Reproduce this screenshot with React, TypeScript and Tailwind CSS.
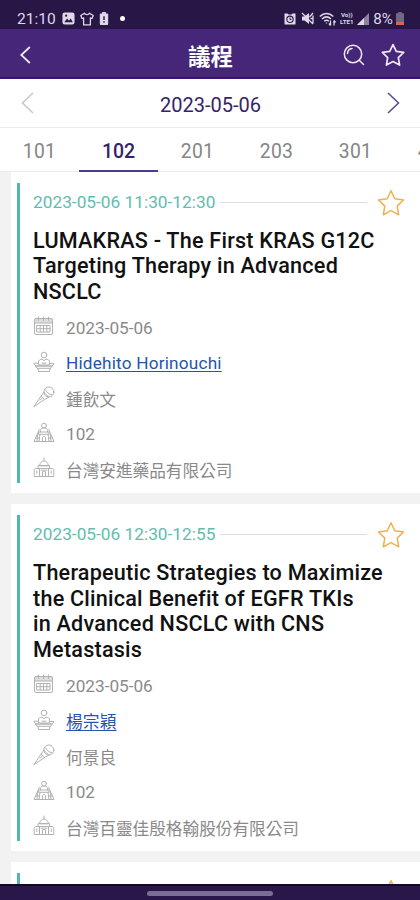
import type { ReactNode } from 'react';

interface Session {
  time: string;
  title: string[];
  date: string;
  speaker: string;
  host: string;
  room: string;
  sponsor: string;
}

const rooms = ['101', '102', '201', '203', '301', '401'];

const sessions: Session[] = [
  {
    time: '2023-05-06 11:30-12:30',
    title: ['LUMAKRAS - The First KRAS G12C', 'Targeting Therapy in Advanced', 'NSCLC'],
    date: '2023-05-06',
    speaker: 'Hidehito Horinouchi',
    host: '鍾飲文',
    room: '102',
    sponsor: '台灣安進藥品有限公司',
  },
  {
    time: '2023-05-06 12:30-12:55',
    title: ['Therapeutic Strategies to Maximize', 'the Clinical Benefit of EGFR TKIs', 'in Advanced NSCLC with CNS', 'Metastasis'],
    date: '2023-05-06',
    speaker: '楊宗穎',
    host: '何景良',
    room: '102',
    sponsor: '台灣百靈佳殷格翰股份有限公司',
  },
];

function Star({ className }: { className: string }) {
  return (
    <svg viewBox="0 0 28 28" className={className} fill="none" stroke="currentColor" strokeLinejoin="round">
      <path d="M14 1.8l3.8 8 8.7 1.2-6.3 6.1 1.5 8.700L14 21.600l-7.700 4.200 1.500-8.700L1.500 11l8.700-1.200z" />
    </svg>
  );
}

function RowIcon({ children }: { children: ReactNode }) {
  return (
    <svg viewBox="0 0 22 22" className="h-[22px] w-[22px] shrink-0 text-[#b2b2b2]" fill="none" stroke="currentColor" strokeWidth="1" strokeLinejoin="round" strokeLinecap="round">
      {children}
    </svg>
  );
}

function CalendarIcon() {
  return (
    <RowIcon>
      <path d="M1.5 3.5h18V8h-18z" fill="#dedede" stroke="none" />
      <rect x="1.5" y="3.5" width="18" height="16" rx="1.5" />
      <path d="M1.5 8h18M5.5 2v3.6M10.5 2v3.6M15.5 2v3.6" />
      <path d="M4 10.5h13V17H4zM4 13.7h13M7.2 10.5V17M10.5 10.5V17M13.8 10.5V17" />
    </RowIcon>
  );
}

function SpeakerIcon() {
  return (
    <RowIcon>
      <circle cx="11" cy="4" r="2.8" />
      <path d="M5.5 13.5V11c0-1.8 1.6-2.8 3.5-2.8l2 1.5 2-1.5c2 0 3.6 1 3.6 2.8v2.5" />
      <path d="M1 12.5l1.8 2.5h16.4l1.8-2.5h-4L15.5 14h-9L5 12.5zM2.8 15h16.4l-1.5 2.3H4.3zM9 12.2h4M5 17.3l.6 3.2h10.8l.6-3.2" />
    </RowIcon>
  );
}

function MicIcon() {
  return (
    <RowIcon>
      <circle cx="15.9" cy="6" r="5" />
      <path d="M10.9 6.3L8 10.2.9 20.8l10.6-7.3 4.3-2.4M10.9 6.3l4.8 4.7M8 10.2l3.5 3.3M12.7 4c1.2 2.5 3 4.2 6 4.7M8.8 12.5l-1.6 1.7" />
    </RowIcon>
  );
}

function RoomIcon() {
  return (
    <RowIcon>
      <circle cx="11" cy="3.6" r="2.4" />
      <path d="M7.5 10V8.3C7.5 6.8 9 6 11 6s3.5.8 3.5 2.3V10" />
      <path d="M6 10h10v2.3H6zM7 12.3l-1 7.2h10l-1-7.2M6.3 7.5L1 19.5h5M15.7 7.5l5.3 12h-5M4.8 12L4 19M17.2 12l.8 7M2.8 16h3.5M15.7 16h3.5" />
      <path d="M9.5 19.5V16c0-2 3-2 3 0v3.5" />
    </RowIcon>
  );
}

function SponsorIcon() {
  return (
    <RowIcon>
      <path d="M11 1v3M6.5 8.5C7 5.5 9 4 11 4s4 1.5 4.5 4.5zM5.5 8.5h11v3h-11z" />
      <path d="M5.5 11.5H3c-1 0-1.8 1-1.8 2v6h19.6v-6c0-1-.8-2-1.8-2h-2.5M6.5 11.5v8M15.5 11.5v8M9.5 19.5v-4.8h3v4.8" />
      <path d="M3.8 14v2.5M18.2 14v2.5M8 13.2h6" />
    </RowIcon>
  );
}

function Row({ icon, text, link = false }: { icon: ReactNode; text: string; link?: boolean }) {
  const latin = /^[\x20-\x7e]+$/.test(text);
  return (
    <div className="flex h-6 items-center gap-[11px]">
      <div className="-mt-[5px]">{icon}</div>
      <span
        className={`leading-6 whitespace-nowrap ${latin ? '-mt-0.5 text-[17.2px]' : 'mt-0.5 text-[16.65px]'} ${
          link ? 'tracking-[0.2px] text-[#2455ae] underline decoration-1 underline-offset-2' : 'text-[#8a8a8a]'
        }`}
      >
        {text}
      </span>
    </div>
  );
}

function SessionCard({ session }: { session: Session }) {
  return (
    <article className="ml-[11px] flex shrink-0 bg-white pt-[11px] pb-[10.7px] pl-1.5">
      <div className="w-[3px] shrink-0 bg-[#4fb8b0]" />
      <div className="min-w-0 flex-1 pl-[13px]">
        <div className="flex h-[39px] items-center pr-[15px]">
          <span className="text-[17.3px] whitespace-nowrap text-[#62bdb0]">{session.time}</span>
          <div className="mr-[10px] ml-[5px] h-px flex-1 bg-[#dedede]" />
          <Star className="h-7 w-7 stroke-[1.5] text-[#efb04e]" />
        </div>
        <h2 className="mt-[5.5px] text-[21.6px] leading-[25.7px] font-medium tracking-[0.22px] text-[#111111]">
          {session.title.map((line) => (
            <span key={line} className="block whitespace-nowrap">{line}</span>
          ))}
        </h2>
        <div className="mt-[12px] flex flex-col gap-[11.5px]">
          <Row icon={<CalendarIcon />} text={session.date} />
          <Row icon={<SpeakerIcon />} text={session.speaker} link />
          <Row icon={<MicIcon />} text={session.host} />
          <Row icon={<RoomIcon />} text={session.room} />
          <Row icon={<SponsorIcon />} text={session.sponsor} />
        </div>
      </div>
    </article>
  );
}

function StatusBar() {
  return (
    <div className="flex h-[29px] shrink-0 items-center bg-[#281646] pt-2 pr-4 pl-[17px] text-[#ded8e8]">
      <span className="text-[15.5px] leading-5">21:10</span>
      <svg viewBox="0 0 14 14" className="ml-1.5 h-[13px] w-[13px]">
        <rect x="0.5" y="0.5" width="13" height="13" rx="2.5" fill="currentColor" />
        <path d="M2.5 11l3-4 2 2.3L9.3 7l2.4 4z" fill="#281646" />
        <circle cx="4.5" cy="4" r="1.2" fill="#281646" />
      </svg>
      <svg viewBox="0 0 14 14" className="ml-[5px] h-[14px] w-[14px]" fill="none" stroke="currentColor" strokeWidth="1.3" strokeLinejoin="round">
        <path d="M4.5 1.2L.8 3.5 2 6.5l1.6-.6v7h6.8v-7l1.6.6 1.2-3L9.5 1.2C8.8 3 5.2 3 4.5 1.2z" />
      </svg>
      <svg viewBox="0 0 10 14" className="ml-[5px] h-[13px] w-[10px]">
        <path d="M3 0h4v1.5h1.5c.6 0 1 .4 1 1V13c0 .6-.4 1-1 1h-7c-.6 0-1-.4-1-1V2.5c0-.6.4-1 1-1H3z" fill="currentColor" />
        <path d="M5 4.5v4M5 10v1.7" stroke="#281646" strokeWidth="1.5" />
      </svg>
      <span className="ml-[11px] h-[5px] w-[5px] rounded-full bg-white" />
      <div className="ml-auto flex items-center">
        <svg viewBox="0 0 12 12" className="h-[12px] w-[12px]">
          <path d="M.5.5h3l1 1h3l1-1h3v11H.5z" fill="currentColor" />
          <circle cx="6" cy="6.3" r="3.2" fill="none" stroke="#281646" strokeWidth="1.1" />
          <path d="M6 4.5v2h1.5" fill="none" stroke="#281646" />
        </svg>
        <svg viewBox="0 0 13 13" className="ml-[5px] h-[13px] w-[13px]">
          <path d="M1 4.5h2.5L8 1v11L3.5 8.5H1z" fill="currentColor" />
          <path d="M1 1l11 11M12 1L8.5 5M9.5 6.5H12M12 3.5v8" fill="none" stroke="currentColor" strokeWidth="1.3" />
        </svg>
        <svg viewBox="0 0 18 14" className="ml-[5px] h-[14px] w-[18px]" fill="none" stroke="currentColor" strokeWidth="1.5">
          <path d="M.8 4.5c4-4 9.5-4 13.5 0M3 7c2.8-2.6 6.3-2.6 9 0M5.2 9.3c1.5-1.3 3.200-1.3 4.7 0" />
          <path d="M7.5 11.5v-1M11.5 8.5v5M11.5 13.5l-1.5-2M15 13.5v-5M15 8.5l1.5 2" strokeWidth="1.3" />
        </svg>
        <div className="ml-0.5 flex w-[15px] flex-col items-center text-[6.2px] leading-[7px] font-bold">
          <span>Vo))</span>
          <span>LTE1</span>
        </div>
        <svg viewBox="0 0 12 12" className="ml-[3px] h-[12px] w-[12px]">
          <path d="M0 12L12 0v12z" fill="#8f849f" />
          <path d="M0 12l7-7v7z" fill="currentColor" />
        </svg>
        <span className="ml-1 text-[15.2px] leading-5">8%</span>
        <svg viewBox="0 0 8 13" className="ml-[3px] h-[13px] w-[8px]">
          <path d="M2.2 0h3.6v1.3H8V13H0V1.3h2.2z" fill="#716780" />
          <path d="M0 10h8v3H0z" fill="#dd5f4d" />
        </svg>
      </div>
    </div>
  );
}

export default function App() {
  return (
    <div className="flex h-screen w-full flex-col overflow-hidden bg-[#f2f2f2] font-[Roboto,'Noto_Sans_CJK_TC',sans-serif]">
      <StatusBar />

      <header className="flex h-[50px] shrink-0 items-center border-b-2 border-[#3b1272] bg-[#452678] pt-[3px] pr-[15px] pl-5 text-[#eee9f5]">
        <svg viewBox="0 0 11 18" className="h-[18px] w-[11px]" fill="none" stroke="currentColor" strokeWidth="1.8">
          <path d="M9.8 1L1.3 9l8.5 8" />
        </svg>
        <h1 className="flex-1 pt-1.5 pl-[47px] text-center text-[22.5px] font-bold text-white">議程</h1>
        <svg viewBox="0 0 22 22" className="h-[22px] w-[22px]" fill="none" stroke="currentColor" strokeWidth="1.5">
          <circle cx="10" cy="10" r="8.7" />
          <path d="M16.5 16.5l4 4M4.5 9.5c.2-2.7 2-4.7 4.5-5" strokeLinecap="round" />
        </svg>
        <Star className="ml-4 h-6 w-6 stroke-2" />
      </header>

      <div className="flex h-[49px] shrink-0 items-center justify-between border-b border-[#ececec] bg-white pr-5 pl-[21px]">
        <svg viewBox="0 0 13 22" className="h-[22px] w-[13px]" fill="none" stroke="#c6c6c6" strokeWidth="1.5">
          <path d="M12 1L1.5 11 12 21" />
        </svg>
        <span className="pt-[3px] text-[20px] text-[#352469]">2023-05-06</span>
        <svg viewBox="0 0 13 22" className="h-[22px] w-[13px]" fill="none" stroke="#55459a" strokeWidth="1.5">
          <path d="M1 1l10.5 10L1 21" />
        </svg>
      </div>

      <nav className="flex h-11 shrink-0 border-b border-[#ececec] bg-white">
        {rooms.map((room) => (
          <div
            key={room}
            className={
              room === '102'
                ? '-mb-px flex w-[79px] shrink-0 items-center justify-center border-b-2 border-[#4f3b8a] pt-[6px] text-[19.5px] font-medium text-[#352469]'
                : 'flex w-[79px] shrink-0 items-center justify-center pt-[5px] text-[19.3px] tracking-[0.3px] text-[#858585]'
            }
          >
            {room}
          </div>
        ))}
      </nav>

      <main className="flex min-h-0 flex-1 flex-col gap-[11px] overflow-hidden">
        {sessions.map((session) => (
          <SessionCard key={session.time} session={session} />
        ))}
        <SessionCard session={{ ...sessions[1], time: '2023-05-06 12:55-13:20' }} />
      </main>

      <div className="flex h-4 shrink-0 items-center justify-center border-t-2 border-[#120828] bg-[#2a174a]">
        <div className="h-[5px] w-[126px] rounded-full bg-[#7b6c93]" />
      </div>
    </div>
  );
}
